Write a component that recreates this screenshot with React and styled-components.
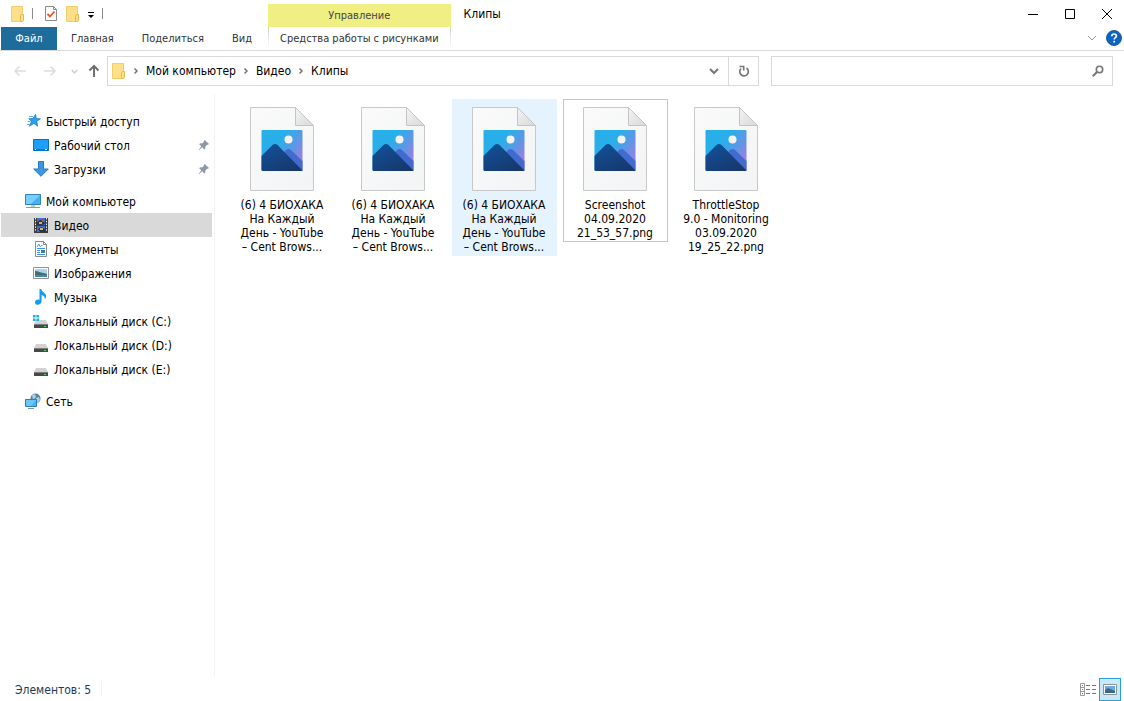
import styled, { createGlobalStyle, css } from 'styled-components';

const GlobalStyle = createGlobalStyle`
    * {
        box-sizing: border-box;
    }

    body {
        margin: 0;
        background: #ffffff;
        color: #000000;
        font-family: Tahoma, 'DejaVu Sans Condensed', 'Noto Sans', sans-serif;
        font-size: 12px;
        line-height: 14px;
    }

    button,
    input {
        font: inherit;
        color: inherit;
    }

    svg {
        display: block;
        flex: none;
    }
`;

const Window = styled.div`
    display: flex;
    flex-direction: column;
    min-height: 100vh;
`;

const plainButton = css`
    display: flex;
    align-items: center;
    justify-content: center;
    padding: 0;
    border: 0;
    background: none;
`;

const Header = styled.header`
    display: flex;
    border-bottom: 1px solid #dadbdc;
`;

const HeaderStart = styled.div`
    padding-right: 2px;
`;

const HeaderEnd = styled.div`
    flex: 1;
`;

const QuickAccess = styled.div`
    display: flex;
    align-items: center;
    height: 27px;
    padding-left: 10px;
    gap: 7px;
`;

const QuickButton = styled.button`
    ${plainButton}
    width: ${({ $narrow }) => ($narrow ? '8px' : '15px')};
`;

const Separator = styled.span`
    width: 1px;
    height: 11px;
    margin-right: 3px;
    background: #8a8a8a;
`;

const Tabs = styled.nav`
    display: flex;
    height: 23px;
    padding-left: 1px;
    font-size: 11px;
`;

const Tab = styled.button`
    ${plainButton}
    padding: 0 14px;
    color: #333333;
`;

const FileTab = styled(Tab)`
    width: 56px;
    background: #1e6c9b;
    color: #ffffff;
`;

const Context = styled.div`
    display: flex;
    flex-direction: column;
    padding-top: 4px;
    font-size: 11px;
`;

const ContextTitle = styled.div`
    display: flex;
    align-items: center;
    justify-content: center;
    height: 23px;
    background: #f0ef83;
    color: #444444;
`;

const ContextTab = styled.button`
    ${plainButton}
    height: 23px;
    padding: 0 11px;
    color: #333333;
    border-left: 1px solid;
    border-right: 1px solid;
    border-image: linear-gradient(#cccccc, #ffffff 90%) 1;
`;

const TitleBar = styled.div`
    display: flex;
    align-items: center;
    justify-content: space-between;
    height: 27px;
    padding-left: 13px;
`;

const Title = styled.h1`
    margin: 0;
    font-size: 12px;
    font-weight: 400;
`;

const Controls = styled.div`
    display: flex;
    gap: 3px;
`;

const ControlButton = styled.button`
    ${plainButton}
    width: 34px;
    height: 27px;
`;

const HelpBar = styled.div`
    display: flex;
    align-items: center;
    justify-content: flex-end;
    gap: 9px;
    height: 22px;
    padding-right: 2px;
`;

const IconButton = styled.button`
    ${plainButton}
`;

const Toolbar = styled.div`
    display: flex;
    align-items: center;
    padding: 5px 11px 8px 5px;
`;

const Arrows = styled.div`
    display: grid;
    grid-template-columns: 30px 30px 18px 22px;
    margin-right: 2px;
`;

const AddressBar = styled.div`
    display: flex;
    flex: 1;
    align-items: center;
    height: 30px;
    border: 1px solid #d9d9d9;
    padding-left: 3px;
`;

const Crumbs = styled.div`
    display: flex;
    flex: 1;
    align-items: center;
    gap: 7px;
`;

const Crumb = styled.button`
    ${plainButton}
`;

const AddressButton = styled.button`
    ${plainButton}
    width: 30px;
    height: 28px;
    border-left: 1px solid ${({ $divided }) => ($divided ? '#d9d9d9' : 'transparent')};
`;

const SearchBox = styled.label`
    display: flex;
    align-items: center;
    width: 342px;
    height: 30px;
    margin-left: 12px;
    padding: 0 8px;
    border: 1px solid #d9d9d9;
`;

const SearchInput = styled.input`
    flex: 1;
    min-width: 0;
    border: 0;
    outline: 0;
    background: none;
`;

const Main = styled.div`
    display: flex;
    flex: 1;
`;

const Sidebar = styled.nav`
    display: flex;
    flex-direction: column;
    gap: 8px;
    width: 215px;
    padding: 15px 2px 0 1px;
    border-right: 1px solid #f3f3f3;
`;

const NavItem = styled.a`
    display: flex;
    align-items: center;
    gap: 5px;
    height: 24px;
    padding-left: ${({ $child }) => ($child ? '32px' : '24px')};
    padding-right: 2px;
    background: ${({ $active }) => ($active ? '#d9d9d9' : 'transparent')};
    color: #000000;
    text-decoration: none;
`;

const NavLabel = styled.span`
    flex: 1;
    padding-top: 2px;
    white-space: nowrap;
`;

const Files = styled.main`
    display: flex;
    flex: 1;
    flex-wrap: wrap;
    align-items: flex-start;
    align-content: flex-start;
    gap: 6px;
    padding: 5px 15px;
`;

const File = styled.button`
    ${plainButton}
    flex-direction: column;
    gap: 7px;
    width: 105px;
    padding: 7px 1px 1px 0;
    border: 1px solid ${({ $state }) => (
        { hover: '#e5f3ff', focused: '#99d1ff' }[$state] || 'transparent'
    )};
    background: ${({ $state }) => ($state === 'hover' ? '#e5f3ff' : 'none')};
`;

const FileName = styled.span`
    white-space: nowrap;
`;

const FileLine = styled.span`
    display: block;
`;

const StatusBar = styled.footer`
    display: flex;
    align-items: center;
    justify-content: space-between;
    height: 24px;
    padding: 0 3px 0 15px;
    color: #1e395b;
`;

const Count = styled.span`
    padding-top: 2px;
    padding-right: 10px;
    border-right: 1px solid #f3f3f3;
`;

const Views = styled.div`
    display: flex;
    align-items: center;
    gap: 3px;
`;

const ViewButton = styled.button`
    ${plainButton}
    width: ${({ $active }) => ($active ? '22px' : '16px')};
    height: 23px;
    border: ${({ $active }) => ($active ? '1px solid #26a0da' : '0')};
    background: ${({ $active }) => ($active ? '#cbe8f6' : 'none')};
`;

const FolderIcon = () => (
    <svg width="15" height="18" viewBox="0 0 15 18">
        <path d="M1.5 1.500h11v15h-11z" fill="#ffe08a" stroke="#f2cd68" />
        <path d="M10.500 16.500v-5.500l1-1.500h2v6l-1 1z" fill="#ffe08a" stroke="#e3b94c" />
    </svg>
);

const CheckedPageIcon = () => (
    <svg width="14" height="17" viewBox="0 0 14 17">
        <path d="M1.500 1.500h8l3 3v11h-11z" fill="#fafafa" stroke="#8c8c8c" />
        <path d="M9.500 1.500v3h3" fill="none" stroke="#8c8c8c" />
        <path d="M3.500 9l2.500 2.500L10.500 6.500" fill="none" stroke="#e8561f" strokeWidth="1.800" />
    </svg>
);

const MenuIcon = () => (
    <svg width="8" height="8" viewBox="0 0 8 8">
        <path d="M1 2h6v1H1zM1 5h6L4 8z" fill="#000000" />
    </svg>
);

const ArrowIcon = ({ color, turn = 0, width = 1.5 }) => (
    <svg width="14" height="14" viewBox="0 0 14 14">
        <path
            d="M13 7H2M6.500 2.500L2 7l4.500 4.500"
            fill="none"
            stroke={color}
            strokeWidth={width}
            transform={`rotate(${turn} 7 7)`}
        />
    </svg>
);

const DownIcon = ({ size, color, width = 1 }) => (
    <svg width={size} height={size} viewBox="0 0 10 10">
        <path d="M1 3l4 4 4-4" fill="none" stroke={color} strokeWidth={width} />
    </svg>
);

const CrumbArrow = () => (
    <svg width="6" height="8" viewBox="0 0 6 8">
        <path d="M1.500 1.500L4 4 1.500 6.500" fill="none" stroke="#777777" strokeWidth="1.500" />
    </svg>
);

const RefreshIcon = () => (
    <svg width="12" height="14" viewBox="0 0 12 14">
        <path d="M8.500 4A4.300 4.300 0 1 1 3 4.500" fill="none" stroke="#777777" strokeWidth="1.700" />
        <path d="M1.500 2.500h4.200v4" fill="none" stroke="#777777" strokeWidth="1.600" />
    </svg>
);

const SearchIcon = () => (
    <svg width="12" height="12" viewBox="0 0 12 12">
        <circle cx="7.500" cy="4.500" r="3.200" fill="none" stroke="#777777" strokeWidth="1.600" />
        <path d="M5.200 6.800L.8 11.200" stroke="#777777" strokeWidth="2" />
    </svg>
);

const HelpIcon = () => (
    <svg width="16" height="16" viewBox="0 0 16 16">
        <circle cx="8" cy="8" r="7.500" fill="#0a64c2" stroke="#2b5d8c" />
        <path
            d="M5.800 6.200c0-3 4.600-2.800 4.600-.2 0 1.600-2.200 1.600-2.200 3.400"
            fill="none"
            stroke="#ffffff"
            strokeWidth="1.700"
        />
        <path d="M7.300 10.800h1.800v1.700H7.300z" fill="#ffffff" />
    </svg>
);

const PinIcon = () => (
    <svg width="12" height="12" viewBox="0 0 12 12">
        <path
            d="M6.800 1l4.200 4-1 .8-.9-.1-1.900 2 .1 2-1 .7-2.200-2.200L.8 11.200l-.2-.3 2.600-3.600L1.200 5.200l.9-.9 2 .1 2-1.900-.1-.8z"
            fill="#8d9aa5"
        />
    </svg>
);

const FilePreview = () => (
    <svg width="64" height="84" viewBox="0 0 64 84">
        <defs>
            <linearGradient id="sheet" x1="0" y1="0" x2="1" y2="1">
                <stop offset="0" stopColor="#fafafa" />
                <stop offset="1" stopColor="#f2f4f5" />
            </linearGradient>
            <linearGradient id="fold" x1="0" y1="0" x2="1" y2="1">
                <stop offset="0" stopColor="#f4f4f4" />
                <stop offset="1" stopColor="#d8d8d8" />
            </linearGradient>
            <linearGradient id="sky" x1="0.400" y1="0.350" x2="1" y2="0.800">
                <stop offset="0" stopColor="#28afea" />
                <stop offset="0.500" stopColor="#6494e4" />
                <stop offset="1" stopColor="#a77be0" />
            </linearGradient>
            <linearGradient id="hill" x1="0" y1="0" x2="0.700" y2="1">
                <stop offset="0" stopColor="#11539a" />
                <stop offset="1" stopColor="#17386f" />
            </linearGradient>
        </defs>
        <path d="M.5.5h45l18 18v65H.5z" fill="url(#sheet)" stroke="#c8c8c8" />
        <path d="M45.500.5v18h18z" fill="url(#fold)" stroke="#c4c4c4" />
        <rect x="11.500" y="23" width="41" height="41" rx="1" fill="url(#sky)" />
        <path d="M30 50l6-7q2.500-2 5 0l11.500 11v10H40z" fill="#426bd0" />
        <path d="M11.500 49l11-11q2.500-2 5 0L52 63v1H12.500l-1-1z" fill="url(#hill)" />
        <circle cx="38.500" cy="32.500" r="4" fill="#f3f3f3" />
    </svg>
);

const DiskShape = () => (
    <>
        <path d="M3 7h10l2 4H1z" fill="#d2d2d2" />
        <path d="M1 11h14v4H1z" fill="#484848" />
        <path d="M1 11h14v1H1z" fill="#7d7d7d" />
        <path d="M11 13h2v1h-2z" fill="#3bea4b" />
    </>
);

const MonitorShape = () => (
    <>
        <path d="M.5 1.500h15v10H.5z" fill="#3fb3f5" stroke="#2f83b8" />
        <path d="M1 2h14L6 11H1z" fill="#79cffc" />
        <path d="M6 12h4v2H6z" fill="#b9cbd6" />
        <path d="M1 14h14v1H1z" fill="#7f9bac" />
    </>
);

const drawings = {
    star: (
        <>
            <path
                d="M10.500 1.500l.8 4 4.200.3-3.700 2.400.8 5-3.600-2.800-4.500 2.800 1.900-4.700L3.800 5.700l4-.2z"
                fill="#2aa0ef"
                stroke="#1479bf"
                strokeWidth="0.700"
            />
            <path d="M4 3.500h4M2.500 8.500h3M2 11.500h3" stroke="#5fb2e8" />
        </>
    ),
    desktop: (
        <>
            <path d="M.5 2.500h15v11H.5z" fill="#1d9ffb" stroke="#0873bd" />
            <path d="M1 12h14v1H1z" fill="#0b77c9" />
            <path d="M2 12h1v1H2zM12 12h2v1h-2z" fill="#ffffff" />
        </>
    ),
    download: (
        <path d="M5.500.5h5V8h4.800L8 15.300.7 8h4.800z" fill="#3b96e3" stroke="#2a79be" />
    ),
    computer: <MonitorShape />,
    video: (
        <>
            <path d="M1 1h14v15H1z" fill="#3a3a3a" />
            <path d="M4 1h8v7H4zM4 9h8v6H4z" fill="#3f6fd0" />
            <path d="M4 5l3-2 4 1 1 3-4 1H4zM5 12l3-2 4 2v3H7z" fill="#27364b" />
            <path d="M6 5h3v2H6zM7 11h3v2H7z" fill="#e0b83c" />
            <path d="M9 3h2v2H9z" fill="#c6483b" />
            <path d="M2.500 1v14M13.500 1v14" stroke="#f1f1f1" strokeDasharray="1.500 1.300" />
        </>
    ),
    documents: (
        <>
            <path d="M2.500.5h8l3 3v12h-11z" fill="#ffffff" stroke="#8b8b8b" />
            <path d="M10.500.5v3h3" fill="none" stroke="#8b8b8b" />
            <path
                d="M4 6l1.800-3L7.500 6M8 4.500h1.500M4 7.500h8M4 9.500h3M4 11.500h3M4 13.500h8"
                fill="none"
                stroke="#3f9bd8"
            />
            <path d="M8 9h4v3H8z" fill="#3c7e9b" />
        </>
    ),
    images: (
        <>
            <path d="M.5 2.500h15v11H.5z" fill="#ffffff" stroke="#929292" />
            <path d="M2 4h12v8H2z" fill="#a9d3f0" />
            <path d="M2 6c3 0 7 2 12 3v1.500H2z" fill="#416e72" />
            <path d="M2 10h12v2H2z" fill="#4287bd" />
        </>
    ),
    music: (
        <path
            d="M6.500 0h1.800c.3 3 4.800 3.600 4.800 7.200 0 1.200-.5 2.500-1.200 3.300.3-2.600-1.500-4-3.300-4.400V12c0 4.600-6.600 4.900-6.600 1.500 0-2.500 2.500-3.300 4.500-2.700z"
            fill="#129df5"
        />
    ),
    systemDisk: (
        <>
            <DiskShape />
            <path
                d="M0 2h2.600v2.600H0zM3.400 2H6v2.600H3.400zM0 5.400h2.600V8H0zM3.400 5.400H6V8H3.400z"
                fill="#15b1e9"
            />
        </>
    ),
    disk: <DiskShape />,
    network: (
        <>
            <circle cx="10.500" cy="5.500" r="5" fill="#4f86a6" />
            <path d="M7 2l3-1 1 3-3 3zM11 5l3-1 1 3-3 3z" fill="#a8d0df" />
            <path d="M.5 6.500h11v7H.5z" fill="#45b5f5" stroke="#2c7eb8" />
            <path d="M1 7h10l-5 6H1z" fill="#6bc7fa" />
            <path d="M3 15.500h6" stroke="#7c98aa" />
        </>
    ),
};

const NavIcon = ({ name }) => (
    <svg width="16" height="16" viewBox="0 0 16 16">
        {drawings[name]}
    </svg>
);

const ListViewIcon = () => (
    <svg width="16" height="13" viewBox="0 0 16 13">
        <path d="M.5.5h4v12h-4zM.5 4.500h4M.5 8.500h4" fill="#ffffff" stroke="#999999" />
        <path d="M2 2h1v1H2z" fill="#4f8f6a" />
        <path d="M2 6h1v1H2z" fill="#3c7be0" />
        <path d="M2 10h1v1H2z" fill="#d22f2f" />
        <path
            d="M6 2.500h4M12 2.500h4M6 6.500h4M12 6.500h4M6 10.500h4M12 10.500h4"
            stroke="#777777"
        />
    </svg>
);

const ThumbnailViewIcon = () => (
    <svg width="14" height="11" viewBox="0 0 14 11">
        <path d="M.5.5h13v10H.5z" fill="#ffffff" stroke="#929292" />
        <path d="M2 2h10v7H2z" fill="#6aaaf0" />
        <path d="M2 6l3-2 7 3v1H2z" fill="#3f6c68" />
        <path d="M2 8h10v1H2z" fill="#2c68a7" />
    </svg>
);

const controls = [
    { label: 'Свернуть', path: 'M0 5.500h10' },
    { label: 'Развернуть', path: 'M.5.5h9v9h-9z' },
    { label: 'Закрыть', path: 'M0 0l10 10M10 0L0 10' },
];

const navGroups = [
    [
        { icon: 'star', label: 'Быстрый доступ' },
        { icon: 'desktop', label: 'Рабочий стол', child: true, pinned: true },
        { icon: 'download', label: 'Загрузки', child: true, pinned: true },
    ],
    [
        { icon: 'computer', label: 'Мой компьютер' },
        { icon: 'video', label: 'Видео', child: true, active: true },
        { icon: 'documents', label: 'Документы', child: true },
        { icon: 'images', label: 'Изображения', child: true },
        { icon: 'music', label: 'Музыка', child: true },
        { icon: 'systemDisk', label: 'Локальный диск (C:)', child: true },
        { icon: 'disk', label: 'Локальный диск (D:)', child: true },
        { icon: 'disk', label: 'Локальный диск (E:)', child: true },
    ],
    [{ icon: 'network', label: 'Сеть' }],
];

const clipName = ['(6) 4 БИОХАКА', 'На Каждый', 'День - YouTube', '– Cent Brows...'];

const files = [
    { id: 1, name: clipName },
    { id: 2, name: clipName },
    { id: 3, name: clipName, state: 'hover' },
    { id: 4, name: ['Screenshot', '04.09.2020', '21_53_57.png'], state: 'focused' },
    { id: 5, name: ['ThrottleStop', '9.0 - Monitoring', '03.09.2020', '19_25_22.png'] },
];

const App = () => (
    <Window>
        <GlobalStyle />
        <Header>
            <HeaderStart>
                <QuickAccess>
                    <QuickButton aria-label="Клипы">
                        <FolderIcon />
                    </QuickButton>
                    <Separator />
                    <QuickButton aria-label="Свойства">
                        <CheckedPageIcon />
                    </QuickButton>
                    <QuickButton aria-label="Новая папка">
                        <FolderIcon />
                    </QuickButton>
                    <QuickButton $narrow aria-label="Настройка панели">
                        <MenuIcon />
                    </QuickButton>
                    <Separator />
                </QuickAccess>
                <Tabs>
                    <FileTab>Файл</FileTab>
                    <Tab>Главная</Tab>
                    <Tab>Поделиться</Tab>
                    <Tab>Вид</Tab>
                </Tabs>
            </HeaderStart>
            <Context>
                <ContextTitle>Управление</ContextTitle>
                <ContextTab>Средства работы с рисунками</ContextTab>
            </Context>
            <HeaderEnd>
                <TitleBar>
                    <Title>Клипы</Title>
                    <Controls>
                        {controls.map(({ label, path }) => (
                            <ControlButton key={label} aria-label={label}>
                                <svg width="10" height="10" viewBox="0 0 10 10">
                                    <path d={path} fill="none" stroke="#000000" />
                                </svg>
                            </ControlButton>
                        ))}
                    </Controls>
                </TitleBar>
                <HelpBar>
                    <IconButton aria-label="Свернуть ленту">
                        <DownIcon size={10} color="#999999" />
                    </IconButton>
                    <IconButton aria-label="Справка">
                        <HelpIcon />
                    </IconButton>
                </HelpBar>
            </HeaderEnd>
        </Header>

        <Toolbar>
            <Arrows>
                <IconButton aria-label="Назад">
                    <ArrowIcon color="#dddddd" />
                </IconButton>
                <IconButton aria-label="Вперёд">
                    <ArrowIcon color="#dddddd" turn={180} />
                </IconButton>
                <IconButton aria-label="Последние расположения">
                    <DownIcon size={7} color="#cccccc" width={2} />
                </IconButton>
                <IconButton aria-label="Вверх">
                    <ArrowIcon color="#707070" turn={90} width={2} />
                </IconButton>
            </Arrows>
            <AddressBar>
                <Crumbs>
                    <FolderIcon />
                    <CrumbArrow />
                    <Crumb>Мой компьютер</Crumb>
                    <CrumbArrow />
                    <Crumb>Видео</Crumb>
                    <CrumbArrow />
                    <Crumb>Клипы</Crumb>
                </Crumbs>
                <AddressButton aria-label="Предыдущие расположения">
                    <DownIcon size={10} color="#777777" width={2} />
                </AddressButton>
                <AddressButton $divided aria-label="Обновить">
                    <RefreshIcon />
                </AddressButton>
            </AddressBar>
            <SearchBox>
                <SearchInput type="text" aria-label="Поиск" />
                <SearchIcon />
            </SearchBox>
        </Toolbar>

        <Main>
            <Sidebar>
                {navGroups.map((group) => (
                    <div key={group[0].label}>
                        {group.map(({ icon, label, child, active, pinned }) => (
                            <NavItem key={label} href="#" $child={child} $active={active}>
                                <NavIcon name={icon} />
                                <NavLabel>{label}</NavLabel>
                                {pinned && <PinIcon />}
                            </NavItem>
                        ))}
                    </div>
                ))}
            </Sidebar>
            <Files>
                {files.map(({ id, name, state }) => (
                    <File key={id} $state={state}>
                        <FilePreview />
                        <FileName>
                            {name.map((line) => (
                                <FileLine key={line}>{line}</FileLine>
                            ))}
                        </FileName>
                    </File>
                ))}
            </Files>
        </Main>

        <StatusBar>
            <Count>Элементов: 5</Count>
            <Views>
                <ViewButton aria-label="Таблица">
                    <ListViewIcon />
                </ViewButton>
                <ViewButton $active aria-label="Крупные значки">
                    <ThumbnailViewIcon />
                </ViewButton>
            </Views>
        </StatusBar>
    </Window>
);

export default App;
